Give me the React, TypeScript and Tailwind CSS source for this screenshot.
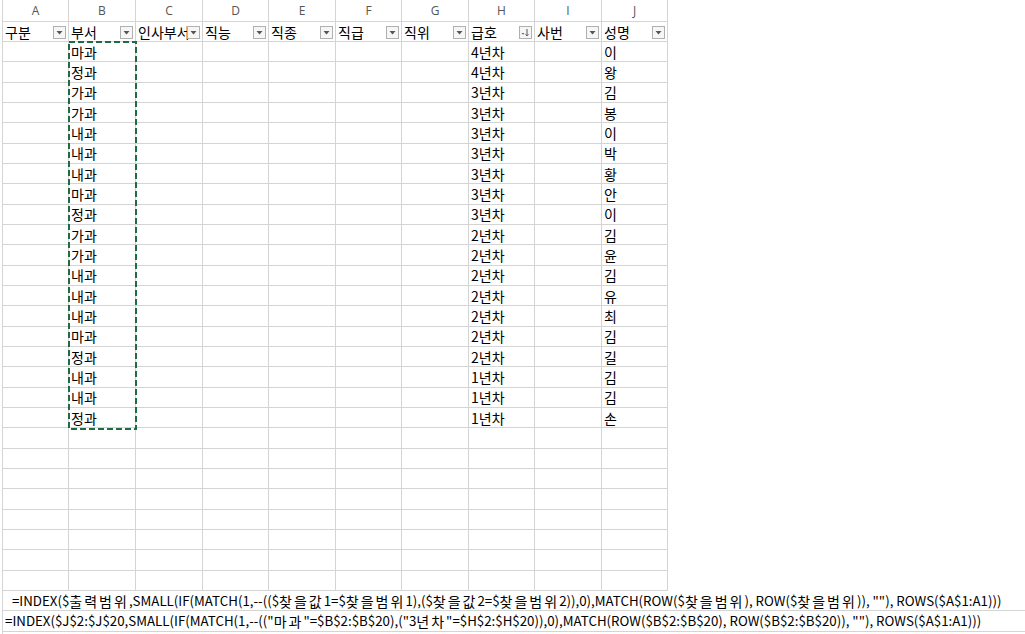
import React from "react";

const widths = [66, 67, 67, 66, 67, 66, 67, 66, 67, 66];
const letters = ["A", "B", "C", "D", "E", "F", "G", "H", "I", "J"];
const heads = ["구분", "부서", "인사부서", "직능", "직종", "직급", "직위", "급호", "사번", "성명"];
const dept = ["마과", "정과", "가과", "가과", "내과", "내과", "내과", "마과", "정과", "가과", "가과", "내과", "내과", "내과", "마과", "정과", "내과", "내과", "정과"];
const grade = ["4년차", "4년차", "3년차", "3년차", "3년차", "3년차", "3년차", "3년차", "3년차", "2년차", "2년차", "2년차", "2년차", "2년차", "2년차", "2년차", "1년차", "1년차", "1년차"];
const names = ["이", "왕", "김", "봉", "이", "박", "황", "안", "이", "김", "윤", "김", "유", "최", "김", "길", "김", "김", "손"];

const FONT = { fontFamily: '"Noto Sans CJK KR", "Noto Sans", sans-serif' };

const F1 = ' =INDEX($출력범위,SMALL(IF(MATCH(1,--(($찾을값1=$찾을범위1),($찾을값2=$찾을범위2)),0),MATCH(ROW($찾을범위), ROW($찾을범위)), ""), ROWS($A$1:A1)))';
const F2 = '=INDEX($J$2:$J$20,SMALL(IF(MATCH(1,--(("마과"=$B$2:$B$20),("3년차"=$H$2:$H$20)),0),MATCH(ROW($B$2:$B$20), ROW($B$2:$B$20)), ""), ROWS($A$1:A1)))';

function splitRuns(s: string) {
  const out: { k: boolean; t: string }[] = [];
  for (const ch of s) {
    const k = /[\uAC00-\uD7A3]/.test(ch);
    const last = out[out.length - 1];
    if (last && last.k === k) last.t += ch;
    else out.push({ k, t: ch });
  }
  return out;
}

function Formula({ text }: { text: string }) {
  return (
    <>
      {splitRuns(text).map((r, i) =>
        r.k ? (
          <span key={i} className="text-[14px] tracking-[2px]">
            {r.t}
          </span>
        ) : (
          <span key={i}>{r.t}</span>
        )
      )}
    </>
  );
}

function FilterBtn({ sort }: { sort?: boolean }) {
  return (
    <div className="absolute right-[2px] top-[4px] w-[13px] h-[13px] border border-[#b0b0b0] bg-[#f6f6f6] flex items-center justify-center">
      {sort ? (
        <svg width="11" height="11" viewBox="0 0 11 11">
          <path d="M1.5 6 L4.5 6 L3 7.8 Z" fill="#666" />
          <line x1="7" y1="2" x2="7" y2="9" stroke="#555" strokeWidth="1" />
          <path d="M5.5 7.3 L7 8.8 L8.5 7.3" stroke="#555" strokeWidth="1" fill="none" />
        </svg>
      ) : (
        <svg width="7" height="4" viewBox="0 0 7 4">
          <path d="M0.5 0 L6.5 0 L3.5 3.5 Z" fill="#555" />
        </svg>
      )}
    </div>
  );
}

function Row({ cells, header }: { cells: (string | null)[]; header?: boolean }) {
  return (
    <div className="flex h-[20.33px] shrink-0">
      <div className="w-[2px] shrink-0" />
      <div className="flex border-l border-[#d4d4d4]">
        {widths.map((w, i) => (
          <div
            key={i}
            style={{ width: w }}
            className="relative shrink-0 border-r border-b border-[#d4d4d4] overflow-hidden"
          >
            {cells[i] ? (
              <span className="absolute left-[2px] top-0 h-full flex items-center whitespace-nowrap text-[14px] text-black leading-none">
                {cells[i]}
              </span>
            ) : null}
            {header ? <FilterBtn sort={i === 7} /> : null}
          </div>
        ))}
      </div>
    </div>
  );
}

export default function App() {
  const rows: (string | null)[][] = [];
  for (let i = 0; i < 19; i++) {
    rows.push([null, dept[i], null, null, null, null, null, grade[i], null, names[i]]);
  }
  for (let i = 0; i < 8; i++) rows.push([null, null, null, null, null, null, null, null, null, null]);

  return (
    <div className="w-[1025px] h-[634px] bg-white overflow-hidden relative" style={FONT}>
      <div className="flex flex-col">
        <div className="flex h-[22px] shrink-0">
          <div className="w-[2px] shrink-0" />
          <div className="flex border-l border-[#d4d4d4]">
            {widths.map((w, i) => (
              <div
                key={i}
                style={{ width: w }}
                className="shrink-0 border-r border-b border-[#d4d4d4] flex items-center justify-center text-[12px] text-[#555]"
              >
                <span style={{ fontFamily: '"Open Sans", "Noto Sans", sans-serif' }}>{letters[i]}</span>
              </div>
            ))}
          </div>
        </div>
        <div className="h-[20px] flex flex-col">
          <Row cells={heads} header />
        </div>
        {rows.map((r, i) => (
          <Row key={i} cells={r} />
        ))}
        <div className="flex h-[20.33px] shrink-0">
          <div className="w-[2px] shrink-0" />
          <div className="flex-1 border-l border-b border-[#d4d4d4] flex items-center whitespace-pre text-[13.3px] text-black pl-[6px] leading-none">
            <Formula text={F1} />
          </div>
        </div>
        <div className="flex h-[20.33px] shrink-0">
          <div className="w-[2px] shrink-0" />
          <div className="flex-1 border-l border-b border-[#d4d4d4] flex items-center whitespace-pre text-[13.3px] text-black pl-[2px] leading-none">
            <Formula text={F2} />
          </div>
        </div>
        <div className="flex h-[10px] shrink-0">
          <div className="w-[2px] shrink-0" />
          <div className="flex-1 border-l border-[#d4d4d4]" />
        </div>
      </div>
      <svg className="absolute left-[68px] top-[41px]" width="70" height="390" viewBox="0 0 70 390">
        <rect x="1" y="1" width="67" height="387" fill="none" stroke="#1f6b46" strokeWidth="2" strokeDasharray="6 3" />
      </svg>
    </div>
  );
}
